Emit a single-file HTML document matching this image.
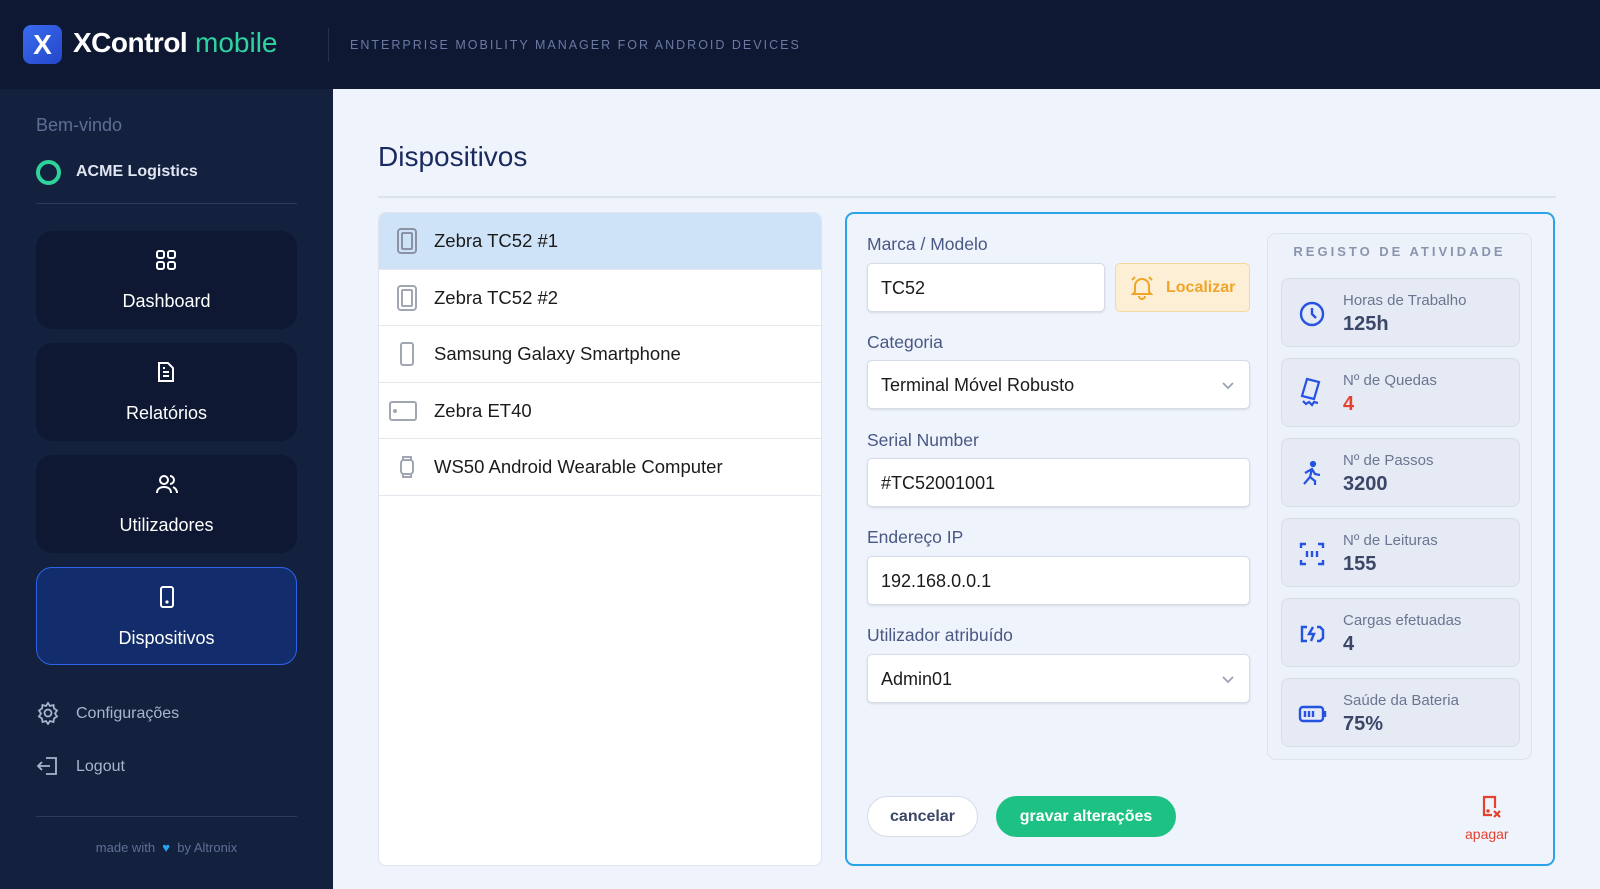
<!DOCTYPE html>
<html><head><meta charset="utf-8"><style>
*{box-sizing:border-box;margin:0;padding:0}
body{width:1600px;height:889px;overflow:hidden;font-family:"Liberation Sans",sans-serif;background:#eef3fc;position:relative}
.abs{position:absolute}
.hdr{left:0;top:0;width:1600px;height:89px;background:#0e1833}
.side{left:0;top:89px;width:333px;height:800px;background:#13213f}
.nav{position:absolute;left:36px;width:261px;height:98px;border-radius:16px;background:#0e1833;color:#fff;text-align:center;font-size:18px}
.nav svg{position:absolute;left:119px;top:18px}
.nav span{position:absolute;left:0;right:0;top:60px}
.nav.act{background:#132c6b;border:1.5px solid #2d63e8}
.lnk{position:absolute;left:36px;color:#aab4cc;font-size:16px}
.lnk span{position:absolute;left:40px;top:4px;white-space:nowrap}
.list{left:378px;top:212px;width:444px;height:654px;background:#fff;border:1px solid #dfe5ef;border-radius:8px;overflow:hidden}
.row{height:56.6px;border-bottom:1px solid #e3e7ee;position:relative;font-size:18.5px;color:#1b1b1b}
.row span{position:absolute;left:55px;top:17px}
.row svg{position:absolute;left:17px;top:15px}
.panel{left:845px;top:212px;width:710px;height:654px;border:2px solid #2aa3e8;border-radius:9px;background:#eef3fc}
.lbl{position:absolute;left:20px;font-size:17.5px;color:#4a5884}
.inp{position:absolute;left:20px;width:383px;height:49px;background:#fff;border:1px solid #d5dbe8;border-radius:5px;box-shadow:0 1px 2px rgba(0,0,0,.1);font-size:18px;color:#1b1b1b;padding:14px 13px}
.chev{position:absolute;right:14px;top:17px}
.act-box{left:1267px;top:233px;width:265px;height:527px;border:1px solid #dde3ef;border-radius:9px;background:#edf1fa}
.card{position:absolute;left:13px;width:239px;height:69px;background:#e5eaf5;border:1px solid #d7ddea;border-radius:8px}
.card svg{position:absolute;left:16px;top:21px}
.card .t{position:absolute;left:61px;top:13px;font-size:15px;color:#6a7590}
.card .v{position:absolute;left:61px;top:34px;font-size:20px;font-weight:bold;color:#3b4768}
</style></head><body>
<div class="abs hdr">
 <div class="abs" style="left:23px;top:25px;width:39px;height:39px;border-radius:8px;background:linear-gradient(135deg,#3a6cf0,#2446c8)"></div>
 <div class="abs" style="left:23px;top:25px;width:39px;height:39px;color:#fff;font-size:28px;font-weight:bold;text-align:center;line-height:39px">X</div>
 <div class="abs" style="left:73px;top:27px;font-size:28px;color:#fff;white-space:nowrap"><b style="letter-spacing:-0.5px">XControl</b> <span style="color:#2ed3a0">mobile</span></div>
 <div class="abs" style="left:328px;top:28px;width:1px;height:34px;background:#26304a"></div>
 <div class="abs" style="left:350px;top:38px;font-size:12.5px;letter-spacing:2px;color:#6b7aa2;white-space:nowrap">ENTERPRISE MOBILITY MANAGER FOR ANDROID DEVICES</div>
</div>
<div class="abs side">
 <div class="abs" style="left:36px;top:26px;font-size:18px;color:#5f6e94">Bem-vindo</div>
 <div class="abs" style="left:36px;top:71px;width:25px;height:25px;border-radius:50%;border:4px solid #2ed39a"></div>
 <div class="abs" style="left:76px;top:74px;font-size:16px;color:#dfe5f2;font-weight:bold">ACME Logistics</div>
 <div class="abs" style="left:36px;top:114px;width:261px;height:1px;background:#2d3a5a"></div>
 <div class="nav" style="top:142px"><svg width="22" height="22" viewBox="0 0 22 22" fill="none" stroke="#fff" stroke-width="2"><rect x="2" y="2" width="7" height="7" rx="2"/><rect x="13" y="2" width="7" height="7" rx="2"/><rect x="2" y="13" width="7" height="7" rx="2"/><rect x="13" y="13" width="7" height="7" rx="2"/></svg><span>Dashboard</span></div>
 <div class="nav" style="top:254px"><svg width="22" height="22" viewBox="0 0 22 22" fill="none" stroke="#fff" stroke-width="2"><path d="M4 2h9l5 5v13H4z M8 11h6 M8 15h6 M8 7h2"/></svg><span>Relatórios</span></div>
 <div class="nav" style="top:366px"><svg width="24" height="22" viewBox="0 0 24 22" fill="none" stroke="#fff" stroke-width="2"><circle cx="9" cy="7" r="4"/><path d="M2 20c0-4 3-6 7-6s7 2 7 6 M15 3a4 4 0 0 1 0 8 M18 14c2 1 4 3 4 6"/></svg><span>Utilizadores</span></div>
 <div class="nav act" style="top:478px"><svg width="22" height="22" viewBox="0 0 22 22" fill="none" stroke="#fff" stroke-width="2"><rect x="5" y="1" width="12" height="20" rx="2"/><circle cx="11" cy="16" r=".6" fill="#fff"/></svg><span>Dispositivos</span></div>
 <div class="lnk" style="top:612px"><svg width="24" height="24" viewBox="0 0 24 24" fill="none" stroke="#aab4cc" stroke-width="1.8"><circle cx="12" cy="12" r="3.5"/><path d="M12 2l2 3 3.5-1 .5 3.5 3 2-2 3 2 3-3 2-.5 3.5-3.5-1-2 3-2-3-3.5 1-.5-3.5-3-2 2-3-2-3 3-2 .5-3.5 3.5 1z"/></svg><span>Configurações</span></div>
 <div class="lnk" style="top:665px"><svg width="24" height="24" viewBox="0 0 24 24" fill="none" stroke="#aab4cc" stroke-width="1.8"><path d="M10 4h10v16H10 M2 12h12 M6 8l-4 4 4 4"/></svg><span>Logout</span></div>
 <div class="abs" style="left:36px;top:727px;width:261px;height:1px;background:#2d3a5a"></div>
 <div class="abs" style="left:0;width:333px;top:751px;text-align:center;font-size:13px;color:#5f6e94">made with &nbsp;<span style="color:#2aa3f0">♥</span>&nbsp; by Altronix</div>
</div>
<div class="abs" style="left:378px;top:141px;font-size:28px;color:#1a2a5e">Dispositivos</div>
<div class="abs" style="left:378px;top:196px;width:1178px;height:2px;background:#dde3ee"></div>
<div class="abs list">
 <div class="row" style="background:#cfe3f8"><svg width="22" height="26" viewBox="0 0 22 26" fill="none" stroke="#8a93a3" stroke-width="2"><rect x="2" y="1" width="18" height="24" rx="3"/><rect x="6" y="5" width="10" height="16" rx="1"/></svg><span>Zebra TC52 #1</span></div>
 <div class="row"><svg width="22" height="26" viewBox="0 0 22 26" fill="none" stroke="#a0a7b3" stroke-width="2"><rect x="2" y="1" width="18" height="24" rx="3"/><rect x="6" y="5" width="10" height="16" rx="1"/></svg><span>Zebra TC52 #2</span></div>
 <div class="row"><svg width="22" height="26" viewBox="0 0 22 26" fill="none" stroke="#a0a7b3" stroke-width="2"><rect x="5" y="2" width="12" height="22" rx="2"/></svg><span>Samsung Galaxy Smartphone</span></div>
 <div class="row"><svg width="30" height="26" viewBox="0 0 30 26" fill="none" stroke="#a0a7b3" stroke-width="2" style="left:9px"><rect x="2" y="4" width="26" height="18" rx="2"/><circle cx="7" cy="13" r="1" fill="#a0a7b3"/></svg><span>Zebra ET40</span></div>
 <div class="row"><svg width="22" height="26" viewBox="0 0 22 26" fill="none" stroke="#a0a7b3" stroke-width="2"><rect x="5" y="6" width="12" height="14" rx="3"/><path d="M7 6V3h8v3 M7 20v3h8v-3"/></svg><span>WS50 Android Wearable Computer</span></div>
</div>
<div class="abs panel">
 <div class="lbl" style="top:20px">Marca / Modelo</div>
 <div class="inp" style="top:49px;width:238px">TC52</div>
 <div class="abs" style="left:268px;top:49px;width:135px;height:49px;background:#fdefd6;border:1px solid #f5d7a2;border-radius:5px;color:#f0a52a;font-weight:bold;font-size:16px;padding:15px 0 0 50px">Localizar</div>
 <svg class="abs" style="left:282px;top:60px" width="26" height="26" viewBox="0 0 26 26" fill="none" stroke="#f0a52a" stroke-width="2"><path d="M6 18V12a7 7 0 0 1 14 0v6l2 2H4z M10 22a3 3 0 0 0 6 0 M3 6l3-3 M23 6l-3-3"/></svg>
 <div class="lbl" style="top:118px">Categoria</div>
 <div class="inp" style="top:146px">Terminal Móvel Robusto<svg class="chev" width="14" height="14" viewBox="0 0 14 14" fill="none" stroke="#9aa2b3" stroke-width="1.8"><path d="M2 5l5 5 5-5"/></svg></div>
 <div class="lbl" style="top:216px">Serial Number</div>
 <div class="inp" style="top:244px">#TC52001001</div>
 <div class="lbl" style="top:313px">Endereço IP</div>
 <div class="inp" style="top:342px">192.168.0.0.1</div>
 <div class="lbl" style="top:411px">Utilizador atribuído</div>
 <div class="inp" style="top:440px">Admin01<svg class="chev" width="14" height="14" viewBox="0 0 14 14" fill="none" stroke="#9aa2b3" stroke-width="1.8"><path d="M2 5l5 5 5-5"/></svg></div>
 <div class="abs" style="left:20px;top:582px;width:111px;height:41px;border-radius:21px;background:#fff;border:1px solid #d5dbe8;color:#3b4768;font-weight:bold;font-size:16px;text-align:center;line-height:39px">cancelar</div>
 <div class="abs" style="left:149px;top:582px;width:180px;height:41px;border-radius:21px;background:#1ec184;color:#fff;font-weight:bold;font-size:16px;text-align:center;line-height:41px">gravar alterações</div>
 <svg class="abs" style="left:632px;top:580px" width="24" height="26" viewBox="0 0 24 26" fill="none" stroke="#e5412f" stroke-width="2.2"><path d="M13 21H5V3h11v11"/><path d="M15 17l6 6 M21 17l-6 6"/><circle cx="9" cy="17" r=".6" fill="#e5412f"/></svg>
 <div class="abs" style="left:618px;top:612px;font-size:14px;color:#e5412f">apagar</div>
</div>
<div class="abs act-box">
 <div class="abs" style="left:0;right:0;top:10px;text-align:center;font-size:13px;letter-spacing:3px;color:#8a95ad;font-weight:bold">REGISTO DE ATIVIDADE</div>
 <div class="card" style="top:44px"><svg width="28" height="28" viewBox="0 0 28 28" fill="none" stroke="#2552e0" stroke-width="2.4"><circle cx="14" cy="14" r="11"/><path d="M14 8v6l4 4"/></svg><div class="t">Horas de Trabalho</div><div class="v">125h</div></div>
 <div class="card" style="top:124px"><svg width="30" height="34" viewBox="0 0 30 34" fill="none" stroke="#2552e0" stroke-width="2.2" style="top:16px"><path d="M9 4l12 3-5 17-12-3z M5 26l3 3 3-2 3 3 2-3 4 1"/></svg><div class="t">Nº de Quedas</div><div class="v" style="color:#e5412f">4</div></div>
 <div class="card" style="top:204px"><svg width="28" height="30" viewBox="0 0 28 30" fill="none" stroke="#2552e0" stroke-width="2.2"><circle cx="15" cy="4" r="2" fill="#2552e0"/><path d="M7 13l7-4 3 5 5 1 M14 9l-2 8-6 7 M12 17l5 4v4"/></svg><div class="t">Nº de Passos</div><div class="v">3200</div></div>
 <div class="card" style="top:284px"><svg width="28" height="28" viewBox="0 0 28 28" fill="none" stroke="#2552e0" stroke-width="2.4"><path d="M3 8V4h5 M20 4h5v4 M3 20v4h5 M20 24h5v-4 M9 11v6 M14 11v6 M19 11v6"/></svg><div class="t">Nº de Leituras</div><div class="v">155</div></div>
 <div class="card" style="top:364px"><svg width="28" height="28" viewBox="0 0 28 28" fill="none" stroke="#2552e0" stroke-width="2.4"><path d="M9 7H4v14h5 M19 7h3l3 3v8l-3 3h-3 M15 7l-4 7h5l-3 7"/></svg><div class="t">Cargas efetuadas</div><div class="v">4</div></div>
 <div class="card" style="top:444px"><svg width="30" height="28" viewBox="0 0 30 28" fill="none" stroke="#2552e0" stroke-width="2.4"><rect x="2" y="7" width="23" height="14" rx="3"/><path d="M27 11v6 M7 11v6 M11 11v6 M15 11v6"/></svg><div class="t">Saúde da Bateria</div><div class="v">75%</div></div>
</div>
</body></html>
